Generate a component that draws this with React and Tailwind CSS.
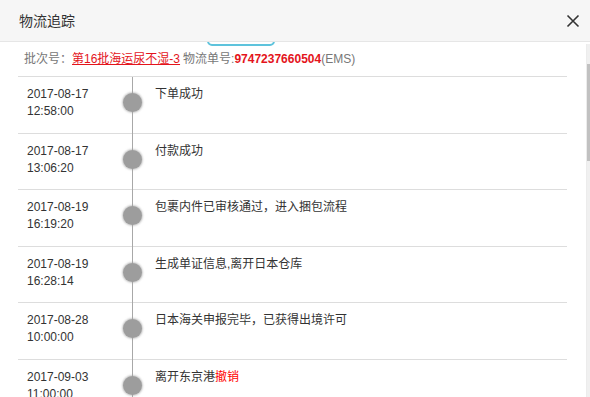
import React from "react";

const rows = [
  { d: "2017-08-17", t: "12:58:00", e: <>下单成功</> },
  { d: "2017-08-17", t: "13:06:20", e: <>付款成功</> },
  { d: "2017-08-19", t: "16:19:20", e: <>包裹内件已审核通过，进入捆包流程</> },
  { d: "2017-08-19", t: "16:28:14", e: <>生成单证信息,离开日本仓库</> },
  { d: "2017-08-28", t: "10:00:00", e: <>日本海关申报完毕，已获得出境许可</> },
  { d: "2017-09-03", t: "11:00:00", e: <>离开东京港<span className="text-[#f00]">撤销</span></> },
];

export default function App() {
  return (
    <div className="relative w-[590px] h-[397px] overflow-hidden bg-white text-[#333] font-['Liberation_Sans','Noto_Sans_CJK_SC',sans-serif]">
      <div className="absolute left-[207px] top-[28px] w-[68px] h-[18px] rounded-[5px] border-2 border-[#5ec3dc]" />
      <header className="relative z-10 h-[42px] bg-[#f6f6f6] border-b border-[#e6e6e6] flex items-center justify-between pl-[19px] pr-[10px]">
        <span className="text-[14px] leading-none">物流追踪</span>
        <svg width="14" height="14" viewBox="0 0 14 14" className="mt-[1px]">
          <path d="M1.5 1.5 L12.5 12.5 M12.5 1.5 L1.5 12.5" stroke="#333" strokeWidth="1.6" fill="none" />
        </svg>
      </header>
      <div className="pl-[18px] pr-[23px]">
        <div className="h-[35px] flex items-center pl-[6px] text-[12px] text-[#777] border-b border-[#ddd] whitespace-nowrap">
          <span>批次号：</span>
          <span className="text-[#e4141b] underline">第16批海运尿不湿-3</span>
          <span className="ml-[3px]">物流单号:</span>
          <span className="text-[#e4141b] font-bold">9747237660504</span>
          <span>(EMS)</span>
        </div>
        {rows.map((r, i) => (
          <div key={i} className="flex h-[56.6px] border-b border-[#ddd] pl-[9px] text-[12px] leading-[17px]">
            <div className="w-[95px] pt-[9px]">
              <div>{r.d}</div>
              <div>{r.t}</div>
            </div>
            <div className="relative w-[21px]">
              <div className="absolute left-[10px] top-0 -bottom-[1px] w-px bg-[#a8a8a8]" />
              <div className="absolute left-[1px] top-[16px] w-[19px] h-[19px] rounded-full bg-[#9d9d9d] shadow-[0_0_2px_1px_rgba(160,160,160,0.6)]" />
            </div>
            <div className="pl-[12px] pt-[9px]">{r.e}</div>
          </div>
        ))}
      </div>
      <div className="absolute right-0 top-[44px] bottom-0 w-[4px] bg-[#f0f0f0] border-l border-[#ececec]" />
      <div className="absolute right-0 top-[64px] w-[3px] h-[97px] bg-[#c1c1c1]" />
    </div>
  );
}
